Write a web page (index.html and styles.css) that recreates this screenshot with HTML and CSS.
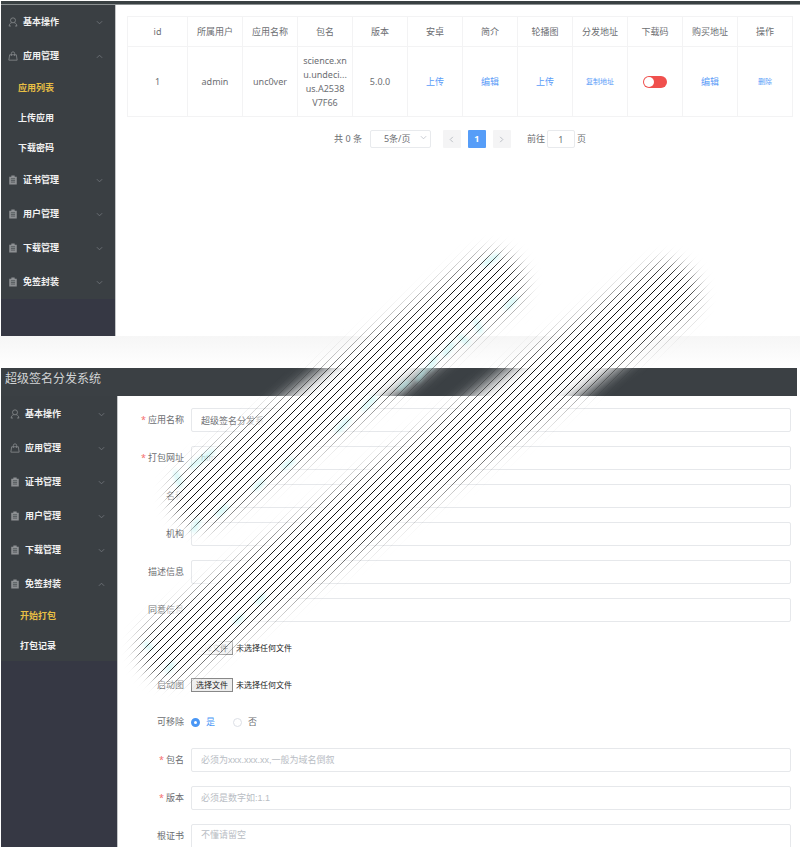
FILE: index.html
```html
<!DOCTYPE html>
<html lang="zh-CN">
<head>
    <meta charset="UTF-8">
    <meta name="viewport" content="width=device-width, initial-scale=1.0">
    <title>超级签名分发系统</title>
    <link rel="stylesheet" href="styles.css">
</head>
<body>
<svg class="sprite" aria-hidden="true">
    <symbol id="icon-user" viewBox="0 0 12 12">
        <circle cx="6" cy="4" r="3"/>
        <path d="M1.500 10.800c0-2.300 1-3.300 2.800-3.800M7.700 7c1.800.500 2.800 1.500 2.800 3.800M1 10.800h2.500M8.500 10.800H11"/>
    </symbol>
    <symbol id="icon-bag" viewBox="0 0 12 12">
        <path d="M2 4.500h8l1 6.500H1zM4 6V3a2 2 0 0 1 4 0v3"/>
    </symbol>
    <symbol id="icon-list" viewBox="0 0 12 12">
        <path class="fill" d="M1.500 2h9v9.500h-9zM4 .5h4v2H4z"/>
        <path class="lines" d="M3.500 4.500h5M3.500 6.500h5M3.500 8.500h5"/>
    </symbol>
    <symbol id="icon-down" viewBox="0 0 8 8"><path d="M1 2.500l3 3 3-3"/></symbol>
    <symbol id="icon-up" viewBox="0 0 8 8"><path d="M1 5.500l3-3 3 3"/></symbol>
    <symbol id="icon-left" viewBox="0 0 8 8"><path d="M5.500 1l-3 3 3 3"/></symbol>
    <symbol id="icon-right" viewBox="0 0 8 8"><path d="M2.500 1l3 3-3 3"/></symbol>
</svg>

<!-- 应用列表 -->
<section class="panel panel-list">
    <div class="topbar"></div>
    <div class="layout">
        <nav class="sidebar">
            <div class="menu">
                <button class="menu-item"><svg class="icon"><use href="#icon-user"/></svg><span>基本操作</span><svg class="arrow"><use href="#icon-down"/></svg></button>
                <button class="menu-item"><svg class="icon"><use href="#icon-bag"/></svg><span>应用管理</span><svg class="arrow"><use href="#icon-up"/></svg></button>
                <a class="sub-item active" href="#list">应用列表</a>
                <a class="sub-item" href="#upload">上传应用</a>
                <a class="sub-item" href="#code">下载密码</a>
                <button class="menu-item"><svg class="icon"><use href="#icon-list"/></svg><span>证书管理</span><svg class="arrow"><use href="#icon-down"/></svg></button>
                <button class="menu-item"><svg class="icon"><use href="#icon-list"/></svg><span>用户管理</span><svg class="arrow"><use href="#icon-down"/></svg></button>
                <button class="menu-item"><svg class="icon"><use href="#icon-list"/></svg><span>下载管理</span><svg class="arrow"><use href="#icon-down"/></svg></button>
                <button class="menu-item"><svg class="icon"><use href="#icon-list"/></svg><span>免签封装</span><svg class="arrow"><use href="#icon-down"/></svg></button>
            </div>
        </nav>
        <main class="list-content">
            <table class="app-table">
                <thead>
                <tr>
                    <th class="col-id">id</th>
                    <th>所属用户</th>
                    <th>应用名称</th>
                    <th>包名</th>
                    <th>版本</th>
                    <th>安卓</th>
                    <th>简介</th>
                    <th>轮播图</th>
                    <th>分发地址</th>
                    <th>下载码</th>
                    <th>购买地址</th>
                    <th>操作</th>
                </tr>
                </thead>
                <tbody>
                <tr>
                    <td>1</td>
                    <td>admin</td>
                    <td>unc0ver</td>
                    <td>science.xn<br>u.undeci...<br>us.A2538<br>V7F66</td>
                    <td>5.0.0</td>
                    <td><a href="#android">上传</a></td>
                    <td><a href="#intro">编辑</a></td>
                    <td><a href="#banner">上传</a></td>
                    <td><a class="small" href="#copy">复制地址</a></td>
                    <td><input class="switch" type="checkbox" aria-label="下载码"></td>
                    <td><a href="#buy">编辑</a></td>
                    <td><a class="small" href="#delete">删除</a></td>
                </tr>
                </tbody>
            </table>
            <div class="pagination">
                <span>共 0 条</span>
                <span class="page-size">
                    <select aria-label="每页条数"><option>5条/页</option></select>
                    <svg class="arrow"><use href="#icon-down"/></svg>
                </span>
                <span class="pager">
                    <button aria-label="上一页"><svg class="arrow"><use href="#icon-left"/></svg></button>
                    <button class="current">1</button>
                    <button aria-label="下一页"><svg class="arrow"><use href="#icon-right"/></svg></button>
                </span>
                <span class="jump">
                    <label for="page">前往</label>
                    <input type="text" id="page" value="1">
                    <span>页</span>
                </span>
            </div>
        </main>
    </div>
</section>

<div class="divider"></div>

<!-- 开始打包 -->
<section class="panel panel-pack">
    <header class="header">超级签名分发系统</header>
    <div class="layout">
        <nav class="sidebar">
            <div class="menu">
                <button class="menu-item"><svg class="icon"><use href="#icon-user"/></svg><span>基本操作</span><svg class="arrow"><use href="#icon-down"/></svg></button>
                <button class="menu-item"><svg class="icon"><use href="#icon-bag"/></svg><span>应用管理</span><svg class="arrow"><use href="#icon-down"/></svg></button>
                <button class="menu-item"><svg class="icon"><use href="#icon-list"/></svg><span>证书管理</span><svg class="arrow"><use href="#icon-down"/></svg></button>
                <button class="menu-item"><svg class="icon"><use href="#icon-list"/></svg><span>用户管理</span><svg class="arrow"><use href="#icon-down"/></svg></button>
                <button class="menu-item"><svg class="icon"><use href="#icon-list"/></svg><span>下载管理</span><svg class="arrow"><use href="#icon-down"/></svg></button>
                <button class="menu-item"><svg class="icon"><use href="#icon-list"/></svg><span>免签封装</span><svg class="arrow"><use href="#icon-up"/></svg></button>
                <a class="sub-item active" href="#pack">开始打包</a>
                <a class="sub-item" href="#records">打包记录</a>
            </div>
        </nav>
        <form class="pack-form">
            <div class="row">
                <label class="required" for="appName">应用名称</label>
                <input type="text" id="appName" value="超级签名分发系">
            </div>
            <div class="row">
                <label class="required" for="url">打包网址</label>
                <input type="text" id="url" value="http">
            </div>
            <div class="row">
                <label for="name">名称</label>
                <input type="text" id="name">
            </div>
            <div class="row">
                <label for="org">机构</label>
                <input type="text" id="org">
            </div>
            <div class="row">
                <label for="desc">描述信息</label>
                <input type="text" id="desc">
            </div>
            <div class="row">
                <label for="agree">同意信息</label>
                <input type="text" id="agree">
            </div>
            <div class="row row-file">
                <span></span>
                <div class="file">
                    <input type="file" id="iconFile">
                    <label class="file-button" for="iconFile">选择文件</label>
                    <span>未选择任何文件</span>
                </div>
            </div>
            <div class="row row-file">
                <span class="label">启动图</span>
                <div class="file">
                    <input type="file" id="splashFile">
                    <label class="file-button" for="splashFile">选择文件</label>
                    <span>未选择任何文件</span>
                </div>
            </div>
            <div class="row">
                <span class="label">可移除</span>
                <div class="radios">
                    <label><input type="radio" name="removable" checked><span>是</span></label>
                    <label><input type="radio" name="removable"><span>否</span></label>
                </div>
            </div>
            <div class="row">
                <label class="required" for="bundle">包名</label>
                <input type="text" id="bundle" placeholder="必须为xxx.xxx.xx,一般为域名倒叙">
            </div>
            <div class="row">
                <label class="required" for="version">版本</label>
                <input type="text" id="version" placeholder="必须是数字如:1.1">
            </div>
            <div class="row">
                <label for="cert">根证书</label>
                <textarea id="cert" placeholder="不懂请留空"></textarea>
            </div>
        </form>
    </div>
</section>

<!-- 斜线笔刷 -->
<svg class="brush" viewBox="0 0 800 847" aria-hidden="true">
    <defs>
        <pattern id="hatch" width="8" height="8" patternUnits="userSpaceOnUse">
            <path fill="#111" shape-rendering="crispEdges" d="M0 0h1v1H0zM1 7h1v1H1zM2 6h1v1H2zM3 5h1v1H3zM4 4h1v1H4zM5 3h1v1H5zM6 2h1v1H6zM7 1h1v1H7z"/>
        </pattern>
        <filter id="soft" filterUnits="userSpaceOnUse" x="0" y="150" width="800" height="650" color-interpolation-filters="sRGB">
            <feGaussianBlur stdDeviation="8"/>
        </filter>
        <filter id="smudge" filterUnits="userSpaceOnUse" x="0" y="150" width="800" height="650">
            <feGaussianBlur stdDeviation="2"/>
        </filter>
        <mask id="strokes" maskUnits="userSpaceOnUse" x="0" y="150" width="800" height="650" mask-type="alpha">
            <path class="stroke-mask" filter="url(#soft)" d="M202 496L493 284M170 649L667 294"/>
        </mask>
    </defs>
    <path class="stroke-base" filter="url(#soft)" d="M202 496L493 284M170 649L667 294"/>
    <g class="smudges" filter="url(#smudge)">
        <path d="M485 264l12-8M507 307l8-8M476 321l4 10M460 337l7 5M445 354l7-10M430 368l5-10M418 379l6-8M400 388l8-6M364 408l10-10M338 430l10-10M284 467l8-6M256 488l6-6M218 514l8-7M194 530l4-9M176 473l4 12M192 466l20-14M258 602l5-6M236 622l5-5M146 644l4 4M168 670l4-6"/>
    </g>
    <rect width="800" height="847" fill="url(#hatch)" mask="url(#strokes)"/>
</svg>
</body>
</html>
```
FILE: styles.css
```css
* {
    box-sizing: border-box;
}

body {
    font-family: "Noto Sans", "Noto Sans CJK SC", sans-serif;
    font-size: 9px;
    line-height: 14px;
    margin: 0;
    background: #fff;
    color: #6c6e72;
    display: flex;
    flex-direction: column;
    height: 100vh;
    overflow: hidden;
    position: relative;
}

button, input, select, textarea {
    font: inherit;
    color: inherit;
    margin: 0;
}

button {
    border: none;
    cursor: pointer;
}

a {
    color: #5a9cf8;
    text-decoration: none;
}

svg {
    fill: none;
    stroke: currentColor;
}

.sprite {
    position: absolute;
    width: 0;
    height: 0;
}

/* 面板 */
.panel {
    display: flex;
    flex-direction: column;
    padding-left: 1px;
}

.panel-list {
    padding-top: 1px;
}

.panel-pack {
    flex: 1;
    min-height: 0;
    padding-right: 3px;
}

.topbar {
    height: 4px;
    background: #3a4143;
    border-bottom: 1px solid #8d9293;
}

.layout {
    display: flex;
    flex: 1;
    min-height: 0;
}

.divider {
    height: 32px;
    flex-shrink: 0;
    background: linear-gradient(#f6f6f6, #fff);
}

.header {
    height: 28px;
    flex-shrink: 0;
    padding: 0 4px;
    font-size: 12px;
    line-height: 21px;
    color: #d2d4d5;
    background: #3b4044;
}

/* 侧边菜单 */
.sidebar {
    width: 114px;
    flex-shrink: 0;
    background: #363844;
}

.panel-list .sidebar {
    padding-bottom: 37px;
}

.panel-pack .sidebar {
    width: 116px;
}

.menu {
    background: #3a3f43;
}

.panel-pack .menu {
    padding-top: 1px;
}

.menu-item {
    display: flex;
    align-items: center;
    width: 100%;
    height: 34px;
    padding: 0 12px 0 7px;
    background: none;
    color: #f2f2f2;
    font-weight: 700;
}

.panel-pack .menu-item {
    padding-left: 9px;
}

.menu-item span {
    flex: 1;
    margin-left: 5px;
    text-align: left;
}

.icon {
    width: 10px;
    height: 10px;
    color: #85898c;
}

.fill {
    fill: #8d9093;
    stroke: none;
}

.lines {
    stroke: #4b5054;
}

.arrow {
    width: 7px;
    height: 7px;
    color: #70757a;
}

.sub-item {
    display: block;
    height: 30px;
    line-height: 30px;
    padding-left: 17px;
    color: #f2f2f2;
    font-weight: 700;
}

.panel-pack .sub-item {
    padding-left: 19px;
}

.sub-item.active {
    color: #e8bf45;
}

/* 应用表格 */
.list-content {
    flex: 1;
    padding: 11px 7px 0 11px;
    border-left: 1px solid #c4c6c8;
}

.app-table {
    width: 100%;
    table-layout: fixed;
    border-collapse: collapse;
    text-align: center;
}

.app-table th, .app-table td {
    border: 1px solid #f3f3f4;
    padding: 0;
    height: 30px;
}

.app-table th {
    font-weight: 400;
}

.app-table td {
    height: 70px;
}

.app-table .col-id {
    width: 60px;
}

.small {
    font-size: 7px;
}

.switch {
    appearance: none;
    width: 24px;
    height: 12px;
    padding: 1px;
    border-radius: 6px;
    background: #f0504d;
    vertical-align: middle;
}

.switch::before {
    content: "";
    display: block;
    width: 10px;
    height: 10px;
    border-radius: 50%;
    background: #fff;
}

/* 分页 */
.pagination {
    display: flex;
    align-items: center;
    justify-content: center;
    gap: 8px;
    margin-top: 13px;
}

.page-size {
    position: relative;
}

.page-size select {
    appearance: none;
    display: block;
    width: 61px;
    height: 18px;
    padding: 0 13px;
    border: 1px solid #e8eaed;
    border-radius: 2px;
    background: #fff;
}

.page-size .arrow {
    position: absolute;
    top: 4px;
    right: 4px;
    color: #c0c4cc;
}

.pager {
    display: flex;
    gap: 7px;
    margin: 0 8px 0 4px;
}

.pager button {
    display: flex;
    align-items: center;
    justify-content: center;
    width: 18px;
    height: 18px;
    padding: 0;
    border-radius: 1px;
    background: #f4f4f5;
}

.pager .arrow {
    color: #b4b8bf;
}

.pager .current {
    background: #569df8;
    color: #fff;
    font-weight: 700;
}

.jump {
    display: flex;
    align-items: center;
    gap: 2px;
}

.jump input {
    width: 28px;
    height: 18px;
    padding: 0;
    border: 1px solid #e8eaed;
    border-radius: 2px;
    text-align: center;
}

/* 打包表单 */
.pack-form {
    flex: 1;
    display: flex;
    flex-direction: column;
    gap: 14px;
    padding: 12px 6px 0 12px;
    border-left: 1px solid #c4c6c8;
}

.row {
    display: grid;
    grid-template-columns: 54px 1fr;
    grid-template-rows: 24px;
    column-gap: 7px;
    align-items: center;
    height: 24px;
    flex-shrink: 0;
}

.row-file {
    grid-template-rows: 23px;
    height: 23px;
}

.row > label, .label {
    text-align: right;
    white-space: nowrap;
}

.required::before {
    content: "*";
    color: #f56c6c;
    margin-right: 2px;
}

.row > input, .row > textarea {
    width: 100%;
    height: 24px;
    padding: 0 9px;
    border: 1px solid #e6e8eb;
    border-radius: 2px;
    background: #fff;
    font-family: "Liberation Sans", "Noto Sans CJK SC", sans-serif;
}

.row > textarea {
    align-self: start;
    height: 48px;
    padding-top: 3px;
    resize: none;
}

::placeholder {
    color: #b9bdc4;
}

.file {
    display: flex;
    align-items: center;
    gap: 3px;
    font-size: 8px;
    color: #222;
}

.file input {
    position: absolute;
    width: 1px;
    height: 1px;
    opacity: 0;
}

.file-button {
    padding: 0 4px;
    line-height: 12px;
    border: 1px solid #888;
    background: #eee;
}

.radios {
    display: flex;
    gap: 18px;
}

.radios label {
    display: flex;
    align-items: center;
    gap: 6px;
}

.radios input {
    appearance: none;
    width: 9px;
    height: 9px;
    border: 1px solid #dcdfe6;
    border-radius: 50%;
}

.radios input:checked {
    border: 3px solid #4a97f5;
}

.radios input:checked + span {
    color: #4a97f5;
}

/* 斜线笔刷 */
.brush {
    position: absolute;
    top: 0;
    left: 0;
    width: 800px;
    height: 847px;
    stroke: none;
    pointer-events: none;
}

.stroke-base, .stroke-mask {
    stroke: #fff;
    stroke-width: 62px;
    stroke-linecap: round;
}

.smudges {
    stroke: #b5f3f1;
    stroke-width: 5px;
    stroke-linecap: round;
    opacity: 0.6;
}
```
